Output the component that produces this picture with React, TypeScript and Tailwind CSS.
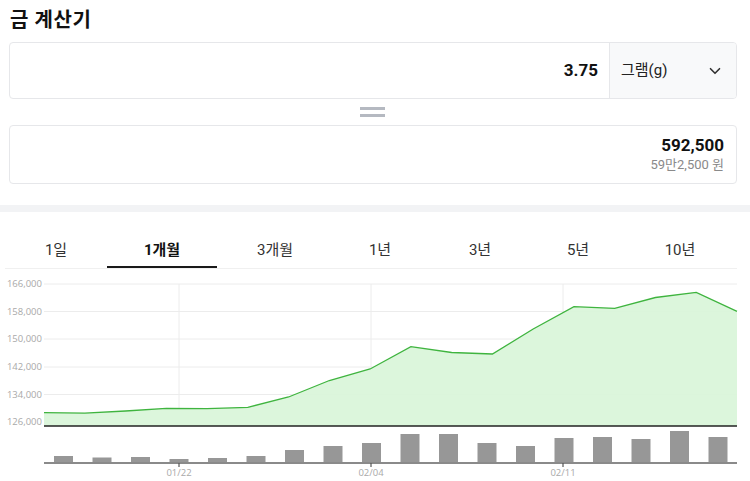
import { ChevronDown } from "lucide-react";

// widths measured so each label sits where the reference puts it
const TABS = [
  { label: "1일", w: "w-[102px]" },
  { label: "1개월", w: "w-[110px]" },
  { label: "3개월", w: "w-[116px]" },
  { label: "1년", w: "w-[94px]" },
  { label: "3년", w: "w-[106px]" },
  { label: "5년", w: "w-[90px]" },
  { label: "10년", w: "w-[114px]" },
];

// price chart points, y in page coords (chart top = page y 270)
const LINE_Y = [
  412.7, 413.2, 411, 408.3, 408.7, 407.3, 397, 380.5, 369, 346.7, 352.5, 354,
  329, 306.7, 308.3, 297.5, 292.3, 311.3,
];
const BAR_TOP = [
  456, 457.5, 457, 459, 458, 456, 450, 446, 443, 434, 434, 443, 446, 438, 437,
  439, 431, 437,
];
const GRID = [
  { y: 284, label: "166,000" },
  { y: 311.5, label: "158,000" },
  { y: 339, label: "150,000" },
  { y: 367, label: "142,000" },
  { y: 394.5, label: "134,000" },
  { y: 422, label: "126,000" },
];
const DATES = [
  { x: 179, label: "01/22" },
  { x: 371, label: "02/04" },
  { x: 563, label: "02/11" },
];

const TOP = 270;
const LEFT = 44;
const RIGHT = 737;

function PriceChart() {
  const step = (RIGHT - LEFT) / (LINE_Y.length - 1);
  const pts = LINE_Y.map((y, i) => `${LEFT + step * i},${y - TOP}`);
  const line = pts.join(" ");
  const area = `${LEFT},${426 - TOP} ${line} ${RIGHT},${426 - TOP}`;

  return (
    <svg width="750" height="211" viewBox="0 0 750 211" className="block mt-[1px]">
      {GRID.map((g) => (
        <g key={g.label}>
          <line x1={LEFT} x2={RIGHT} y1={g.y - TOP} y2={g.y - TOP} stroke="#ececec" strokeWidth="1" />
          <text
            x="42"
            y={g.y - TOP + 3}
            textAnchor="end"
            fontSize="9.5"
            fill="#a9a9a9"
            fontFamily="'Open Sans', sans-serif"
          >
            {g.label}
          </text>
        </g>
      ))}
      {DATES.map((d) => (
        <line key={d.label} x1={d.x} x2={d.x} y1={284 - TOP} y2={423 - TOP} stroke="#ececec" strokeWidth="1" />
      ))}
      <polygon points={area} fill="#daf5da" fillOpacity="0.95" />
      <polyline points={line} fill="none" stroke="#3fb43f" strokeWidth="1.3" />
      <line x1={LEFT} x2={RIGHT} y1={426 - TOP} y2={426 - TOP} stroke="#222" strokeWidth="1.5" />

      {BAR_TOP.map((t, i) => (
        <rect key={i} x={54 + 38.5 * i} y={t - TOP} width="19" height={462 - t} fill="#979797" />
      ))}
      <line x1={LEFT} x2={RIGHT} y1={463 - TOP} y2={463 - TOP} stroke="#8a8a8a" strokeWidth="2" />
      {DATES.map((d) => (
        <g key={d.label}>
          <line x1={d.x} x2={d.x} y1={463 - TOP} y2={467 - TOP} stroke="#555" strokeWidth="1.2" />
          <text
            x={d.x}
            y={476 - TOP}
            textAnchor="middle"
            fontSize="9.5"
            fill="#a9a9a9"
            fontFamily="'Open Sans', sans-serif"
          >
            {d.label}
          </text>
        </g>
      ))}
    </svg>
  );
}

export default function App() {
  return (
    <div
      className="w-[750px] h-[481px] overflow-hidden bg-white text-[#111]"
      style={{ fontFamily: "Roboto, 'Noto Sans CJK KR', sans-serif" }}
    >
      <h1 className="pl-[10px] pt-[7px] h-[42px] text-[20px] font-bold leading-[26px] tracking-[0.6px]">
        금 계산기
      </h1>

      {/* Amount input + unit select */}
      <div className="ml-[9px] w-[728px] h-[57px] flex border border-[#e6e7ea] rounded-[4px] overflow-hidden">
        <div className="flex-1 flex items-center justify-end pr-[11px] text-[17px] font-bold">
          3.75
        </div>
        <div className="w-[127px] flex items-center justify-between pl-[11px] pr-[12px] bg-[#f8f9fa] border-l border-[#e6e7ea]">
          <span className="text-[15px] text-[#222]">그램(g)</span>
          <ChevronDown className="h-[18px] w-[18px] text-[#333]" strokeWidth={2.2} />
        </div>
      </div>

      {/* equals sign */}
      <div className="h-[26px] flex flex-col items-center justify-center gap-[4px] pr-[5px]">
        <span className="block w-[25px] h-[3px] bg-[#b5b9c1]" />
        <span className="block w-[25px] h-[3px] bg-[#b5b9c1]" />
      </div>

      {/* Result */}
      <div className="ml-[9px] w-[728px] h-[59px] border border-[#e6e7ea] rounded-[4px] flex flex-col items-end justify-center pr-[12px]">
        <span className="text-[17px] font-bold leading-[21px]">592,500</span>
        <span className="text-[13px] text-[#8a8a8a] leading-[18px]">59만2,500 원</span>
      </div>

      <div className="h-[21px]" />
      <div className="h-[7px] bg-[#f2f3f5]" />

      {/* Period tabs */}
      <div className="mt-[27px] flex">
        <div className="ml-[5px] flex border-b border-[#f0f0f0]">
          {TABS.map((t, i) => {
            const active = i === 1;
            return (
              <div
                key={t.label}
                className={`${t.w} h-[29px] flex justify-center text-[15px] leading-[22px] ${
                  active
                    ? "font-bold text-[#111] border-b-2 border-[#1a1a1a]"
                    : "text-[#333]"
                }`}
              >
                {t.label}
              </div>
            );
          })}
        </div>
      </div>

      <PriceChart />
    </div>
  );
}
